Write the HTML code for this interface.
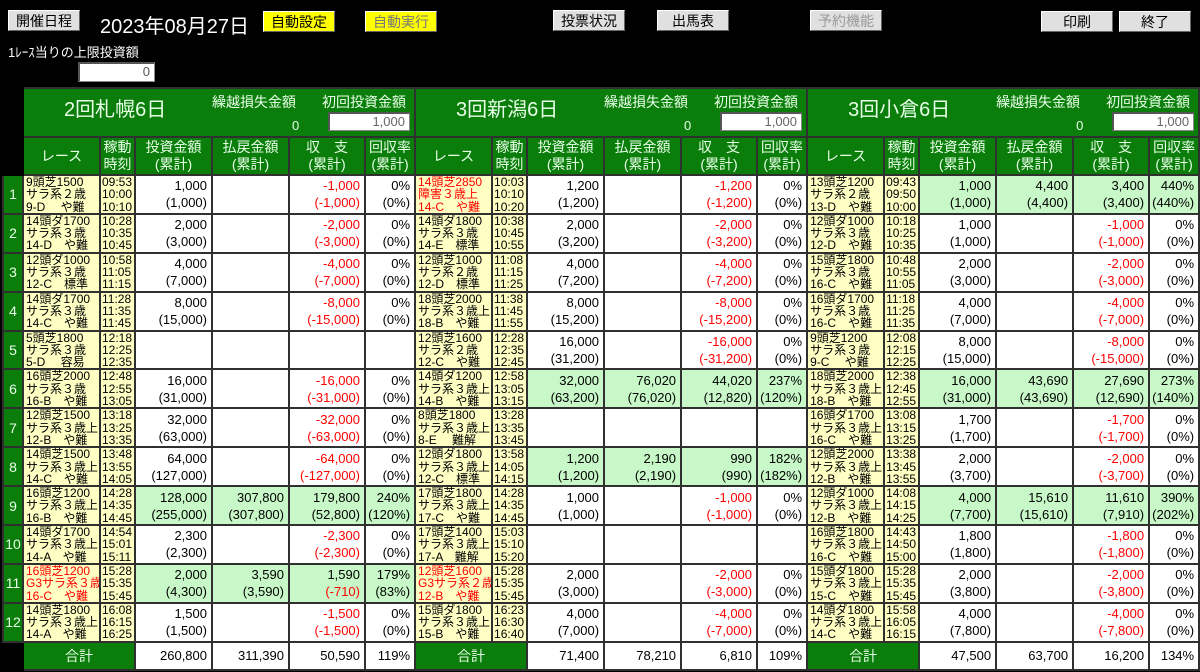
<!DOCTYPE html>
<html><head><meta charset="utf-8"><style>
body{margin:0;background:#000;width:1200px;height:672px;overflow:hidden;position:relative;font-family:"Liberation Sans","Noto Sans CJK JP",sans-serif;}
.b{position:absolute;height:21px;border:1px solid #fff;border-right-color:#666;border-bottom-color:#666;background:#e0e0e0;font-size:14px;text-align:center;line-height:21px;color:#000;box-sizing:border-box;width:72px}
.y{background:#ffff00}
.in{position:absolute;background:#fff;border:1px solid #888;border-top:2px solid #555;border-left:2px solid #555;box-sizing:border-box;text-align:right;font-size:13px;color:#555;padding-right:4px;line-height:16px}
table{position:absolute;left:2px;top:87px;border-collapse:collapse;table-layout:fixed;width:1196px}
td{border:2px solid #303030;padding:0;overflow:hidden;white-space:nowrap}
.h td{background:#0a7d0a;color:#e8ffe8;text-align:center;font-size:14px;line-height:17px}
.sec{position:relative;height:46px}
.sec .nm{position:absolute;left:40px;top:12px;font-size:20px}
.sec .k{position:absolute;left:188px;top:4px;font-size:14px}
.sec .z{position:absolute;left:268px;top:27px;font-size:13px}
.sec .s{position:absolute;left:298px;top:4px;font-size:14px}
.sec .in{left:304px;top:22px;width:82px;height:19px;color:#666}
.rn{background:#0a7d0a;color:#e8ffe8;text-align:center;font-size:14px}
.r{background:#ffffc4;font-size:12px;line-height:12.3px;padding-left:2px;color:#000}
.t{background:#ffffc4;font-size:12px;line-height:12.3px;padding-left:1px;color:#000}
.rd{color:#f00}
.n{background:#fff;text-align:right;font-size:13px;line-height:17px;padding-right:4px;color:#000}
.g{background:#c8f8c8}
.m{color:#f00}
.tot td.n{line-height:24px}
tr.d{height:38.8px}
</style></head><body>
<div class="b" style="left:8px;top:10px">開催日程</div>
<div style="position:absolute;left:100px;top:10px;color:#fff;font-size:20px">2023年08月27日</div>
<div class="b y" style="left:263px;top:11px">自動設定</div>
<div class="b y" style="left:365px;top:11px;color:#777">自動実行</div>
<div class="b" style="left:553px;top:10px">投票状況</div>
<div class="b" style="left:657px;top:10px">出馬表</div>
<div class="b" style="left:810px;top:10px;color:#999">予約機能</div>
<div class="b" style="left:1041px;top:11px">印刷</div>
<div class="b" style="left:1119px;top:11px">終了</div>
<div style="position:absolute;left:8px;top:42px;color:#fff;font-size:13px">1ﾚｰｽ当りの上限投資額</div>
<div class="in" style="left:78px;top:62px;width:77px;height:20px">0</div>
<table>
<colgroup><col style="width:20px"><col style="width:77px"><col style="width:35px"><col style="width:77px"><col style="width:77px"><col style="width:76px"><col style="width:50px"><col style="width:77px"><col style="width:35px"><col style="width:77px"><col style="width:77px"><col style="width:76px"><col style="width:50px"><col style="width:77px"><col style="width:35px"><col style="width:77px"><col style="width:77px"><col style="width:76px"><col style="width:50px"></colgroup>
<tr class="h" style="height:49px"><td style="background:#000;border-color:#000"></td>
<td colspan="6"><div class="sec"><span class="nm">2回札幌6日</span><span class="k">繰越損失金額</span><span class="z">0</span><span class="s">初回投資金額</span><div class="in">1,000</div></div></td>
<td colspan="6"><div class="sec"><span class="nm">3回新潟6日</span><span class="k">繰越損失金額</span><span class="z">0</span><span class="s">初回投資金額</span><div class="in">1,000</div></div></td>
<td colspan="6"><div class="sec"><span class="nm">3回小倉6日</span><span class="k">繰越損失金額</span><span class="z">0</span><span class="s">初回投資金額</span><div class="in">1,000</div></div></td></tr>
<tr class="h" style="height:38px"><td style="background:#000;border-color:#000"></td>
<td>レース</td><td>稼動<br>時刻</td><td>投資金額<br>(累計)</td><td>払戻金額<br>(累計)</td><td>収　支<br>(累計)</td><td>回収率<br>(累計)</td>
<td>レース</td><td>稼動<br>時刻</td><td>投資金額<br>(累計)</td><td>払戻金額<br>(累計)</td><td>収　支<br>(累計)</td><td>回収率<br>(累計)</td>
<td>レース</td><td>稼動<br>時刻</td><td>投資金額<br>(累計)</td><td>払戻金額<br>(累計)</td><td>収　支<br>(累計)</td><td>回収率<br>(累計)</td></tr>

<tr class="d"><td class="rn">1</td>
<td class="r">9頭芝1500<br>サラ系２歳<br>9-D　 や難</td><td class="t">09:53<br>10:00<br>10:10</td><td class="n">1,000<br>(1,000)</td><td class="n"></td><td class="n m">-1,000<br>(-1,000)</td><td class="n">0%<br>(0%)</td>
<td class="r rd">14頭芝2850<br>障害３歳上<br>14-C　や難</td><td class="t">10:03<br>10:10<br>10:20</td><td class="n">1,200<br>(1,200)</td><td class="n"></td><td class="n m">-1,200<br>(-1,200)</td><td class="n">0%<br>(0%)</td>
<td class="r">13頭芝1200<br>サラ系２歳<br>13-D　や難</td><td class="t">09:43<br>09:50<br>10:00</td><td class="n g">1,000<br>(1,000)</td><td class="n g">4,400<br>(4,400)</td><td class="n g">3,400<br>(3,400)</td><td class="n g">440%<br>(440%)</td></tr>

<tr class="d"><td class="rn">2</td>
<td class="r">14頭ダ1700<br>サラ系３歳<br>14-D　や難</td><td class="t">10:28<br>10:35<br>10:45</td><td class="n">2,000<br>(3,000)</td><td class="n"></td><td class="n m">-2,000<br>(-3,000)</td><td class="n">0%<br>(0%)</td>
<td class="r">14頭ダ1800<br>サラ系３歳<br>14-E　標準</td><td class="t">10:38<br>10:45<br>10:55</td><td class="n">2,000<br>(3,200)</td><td class="n"></td><td class="n m">-2,000<br>(-3,200)</td><td class="n">0%<br>(0%)</td>
<td class="r">12頭ダ1000<br>サラ系３歳<br>12-D　や難</td><td class="t">10:18<br>10:25<br>10:35</td><td class="n">1,000<br>(1,000)</td><td class="n"></td><td class="n m">-1,000<br>(-1,000)</td><td class="n">0%<br>(0%)</td></tr>

<tr class="d"><td class="rn">3</td>
<td class="r">12頭ダ1000<br>サラ系３歳<br>12-C　標準</td><td class="t">10:58<br>11:05<br>11:15</td><td class="n">4,000<br>(7,000)</td><td class="n"></td><td class="n m">-4,000<br>(-7,000)</td><td class="n">0%<br>(0%)</td>
<td class="r">12頭芝1000<br>サラ系２歳<br>12-D　標準</td><td class="t">11:08<br>11:15<br>11:25</td><td class="n">4,000<br>(7,200)</td><td class="n"></td><td class="n m">-4,000<br>(-7,200)</td><td class="n">0%<br>(0%)</td>
<td class="r">15頭芝1800<br>サラ系３歳<br>16-C　や難</td><td class="t">10:48<br>10:55<br>11:05</td><td class="n">2,000<br>(3,000)</td><td class="n"></td><td class="n m">-2,000<br>(-3,000)</td><td class="n">0%<br>(0%)</td></tr>

<tr class="d"><td class="rn">4</td>
<td class="r">14頭ダ1700<br>サラ系３歳<br>14-C　や難</td><td class="t">11:28<br>11:35<br>11:45</td><td class="n">8,000<br>(15,000)</td><td class="n"></td><td class="n m">-8,000<br>(-15,000)</td><td class="n">0%<br>(0%)</td>
<td class="r">18頭芝2000<br>サラ系３歳上<br>18-B　や難</td><td class="t">11:38<br>11:45<br>11:55</td><td class="n">8,000<br>(15,200)</td><td class="n"></td><td class="n m">-8,000<br>(-15,200)</td><td class="n">0%<br>(0%)</td>
<td class="r">16頭ダ1700<br>サラ系３歳<br>16-C　や難</td><td class="t">11:18<br>11:25<br>11:35</td><td class="n">4,000<br>(7,000)</td><td class="n"></td><td class="n m">-4,000<br>(-7,000)</td><td class="n">0%<br>(0%)</td></tr>

<tr class="d"><td class="rn">5</td>
<td class="r">5頭芝1800<br>サラ系３歳<br>5-D　 容易</td><td class="t">12:18<br>12:25<br>12:35</td><td class="n"></td><td class="n"></td><td class="n"></td><td class="n"></td>
<td class="r">12頭芝1600<br>サラ系２歳<br>12-C　や難</td><td class="t">12:28<br>12:35<br>12:45</td><td class="n">16,000<br>(31,200)</td><td class="n"></td><td class="n m">-16,000<br>(-31,200)</td><td class="n">0%<br>(0%)</td>
<td class="r">9頭芝1200<br>サラ系３歳<br>9-C　 や難</td><td class="t">12:08<br>12:15<br>12:25</td><td class="n">8,000<br>(15,000)</td><td class="n"></td><td class="n m">-8,000<br>(-15,000)</td><td class="n">0%<br>(0%)</td></tr>

<tr class="d"><td class="rn">6</td>
<td class="r">16頭芝2000<br>サラ系３歳<br>16-B　や難</td><td class="t">12:48<br>12:55<br>13:05</td><td class="n">16,000<br>(31,000)</td><td class="n"></td><td class="n m">-16,000<br>(-31,000)</td><td class="n">0%<br>(0%)</td>
<td class="r">14頭ダ1200<br>サラ系３歳上<br>14-B　や難</td><td class="t">12:58<br>13:05<br>13:15</td><td class="n g">32,000<br>(63,200)</td><td class="n g">76,020<br>(76,020)</td><td class="n g">44,020<br>(12,820)</td><td class="n g">237%<br>(120%)</td>
<td class="r">18頭芝2000<br>サラ系３歳上<br>18-B　や難</td><td class="t">12:38<br>12:45<br>12:55</td><td class="n g">16,000<br>(31,000)</td><td class="n g">43,690<br>(43,690)</td><td class="n g">27,690<br>(12,690)</td><td class="n g">273%<br>(140%)</td></tr>

<tr class="d"><td class="rn">7</td>
<td class="r">12頭芝1500<br>サラ系３歳上<br>12-B　や難</td><td class="t">13:18<br>13:25<br>13:35</td><td class="n">32,000<br>(63,000)</td><td class="n"></td><td class="n m">-32,000<br>(-63,000)</td><td class="n">0%<br>(0%)</td>
<td class="r">8頭芝1800<br>サラ系３歳上<br>8-E　 難解</td><td class="t">13:28<br>13:35<br>13:45</td><td class="n"></td><td class="n"></td><td class="n"></td><td class="n"></td>
<td class="r">16頭ダ1700<br>サラ系３歳上<br>16-C　や難</td><td class="t">13:08<br>13:15<br>13:25</td><td class="n">1,700<br>(1,700)</td><td class="n"></td><td class="n m">-1,700<br>(-1,700)</td><td class="n">0%<br>(0%)</td></tr>

<tr class="d"><td class="rn">8</td>
<td class="r">14頭芝1500<br>サラ系３歳上<br>14-C　や難</td><td class="t">13:48<br>13:55<br>14:05</td><td class="n">64,000<br>(127,000)</td><td class="n"></td><td class="n m">-64,000<br>(-127,000)</td><td class="n">0%<br>(0%)</td>
<td class="r">12頭ダ1800<br>サラ系３歳上<br>12-C　標準</td><td class="t">13:58<br>14:05<br>14:15</td><td class="n g">1,200<br>(1,200)</td><td class="n g">2,190<br>(2,190)</td><td class="n g">990<br>(990)</td><td class="n g">182%<br>(182%)</td>
<td class="r">12頭芝2000<br>サラ系３歳上<br>12-B　や難</td><td class="t">13:38<br>13:45<br>13:55</td><td class="n">2,000<br>(3,700)</td><td class="n"></td><td class="n m">-2,000<br>(-3,700)</td><td class="n">0%<br>(0%)</td></tr>

<tr class="d"><td class="rn">9</td>
<td class="r">16頭芝1200<br>サラ系３歳上<br>16-B　や難</td><td class="t">14:28<br>14:35<br>14:45</td><td class="n g">128,000<br>(255,000)</td><td class="n g">307,800<br>(307,800)</td><td class="n g">179,800<br>(52,800)</td><td class="n g">240%<br>(120%)</td>
<td class="r">17頭芝1800<br>サラ系３歳上<br>17-C　や難</td><td class="t">14:28<br>14:35<br>14:45</td><td class="n">1,000<br>(1,000)</td><td class="n"></td><td class="n m">-1,000<br>(-1,000)</td><td class="n">0%<br>(0%)</td>
<td class="r">12頭ダ1000<br>サラ系３歳上<br>12-B　や難</td><td class="t">14:08<br>14:15<br>14:25</td><td class="n g">4,000<br>(7,700)</td><td class="n g">15,610<br>(15,610)</td><td class="n g">11,610<br>(7,910)</td><td class="n g">390%<br>(202%)</td></tr>

<tr class="d"><td class="rn">10</td>
<td class="r">14頭ダ1700<br>サラ系３歳上<br>14-A　や難</td><td class="t">14:54<br>15:01<br>15:11</td><td class="n">2,300<br>(2,300)</td><td class="n"></td><td class="n m">-2,300<br>(-2,300)</td><td class="n">0%<br>(0%)</td>
<td class="r">17頭芝1400<br>サラ系３歳上<br>17-A　難解</td><td class="t">15:03<br>15:10<br>15:20</td><td class="n"></td><td class="n"></td><td class="n"></td><td class="n"></td>
<td class="r">16頭芝1800<br>サラ系３歳上<br>16-C　や難</td><td class="t">14:43<br>14:50<br>15:00</td><td class="n">1,800<br>(1,800)</td><td class="n"></td><td class="n m">-1,800<br>(-1,800)</td><td class="n">0%<br>(0%)</td></tr>

<tr class="d"><td class="rn">11</td>
<td class="r rd">16頭芝1200<br>G3サラ系３歳<br>16-C　や難</td><td class="t">15:28<br>15:35<br>15:45</td><td class="n g">2,000<br>(4,300)</td><td class="n g">3,590<br>(3,590)</td><td class="n g">1,590<br><span class="m">(-710)</span></td><td class="n g">179%<br>(83%)</td>
<td class="r rd">12頭芝1600<br>G3サラ系２歳<br>12-B　や難</td><td class="t">15:28<br>15:35<br>15:45</td><td class="n">2,000<br>(3,000)</td><td class="n"></td><td class="n m">-2,000<br>(-3,000)</td><td class="n">0%<br>(0%)</td>
<td class="r">15頭ダ1800<br>サラ系３歳上<br>15-C　や難</td><td class="t">15:28<br>15:35<br>15:45</td><td class="n">2,000<br>(3,800)</td><td class="n"></td><td class="n m">-2,000<br>(-3,800)</td><td class="n">0%<br>(0%)</td></tr>

<tr class="d"><td class="rn">12</td>
<td class="r">14頭芝1800<br>サラ系３歳上<br>14-A　や難</td><td class="t">16:08<br>16:15<br>16:25</td><td class="n">1,500<br>(1,500)</td><td class="n"></td><td class="n m">-1,500<br>(-1,500)</td><td class="n">0%<br>(0%)</td>
<td class="r">15頭ダ1800<br>サラ系３歳上<br>15-B　や難</td><td class="t">16:23<br>16:30<br>16:40</td><td class="n">4,000<br>(7,000)</td><td class="n"></td><td class="n m">-4,000<br>(-7,000)</td><td class="n">0%<br>(0%)</td>
<td class="r">14頭ダ1800<br>サラ系３歳上<br>14-C　や難</td><td class="t">15:58<br>16:05<br>16:15</td><td class="n">4,000<br>(7,800)</td><td class="n"></td><td class="n m">-4,000<br>(-7,800)</td><td class="n">0%<br>(0%)</td></tr>

<tr class="tot" style="height:28px"><td style="background:#000;border-color:#000"></td>
<td colspan="2" class="rn">合計</td><td class="n">260,800</td><td class="n">311,390</td><td class="n">50,590</td><td class="n">119%</td>
<td colspan="2" class="rn">合計</td><td class="n">71,400</td><td class="n">78,210</td><td class="n">6,810</td><td class="n">109%</td>
<td colspan="2" class="rn">合計</td><td class="n">47,500</td><td class="n">63,700</td><td class="n">16,200</td><td class="n">134%</td></tr>
</table>
</body></html>
